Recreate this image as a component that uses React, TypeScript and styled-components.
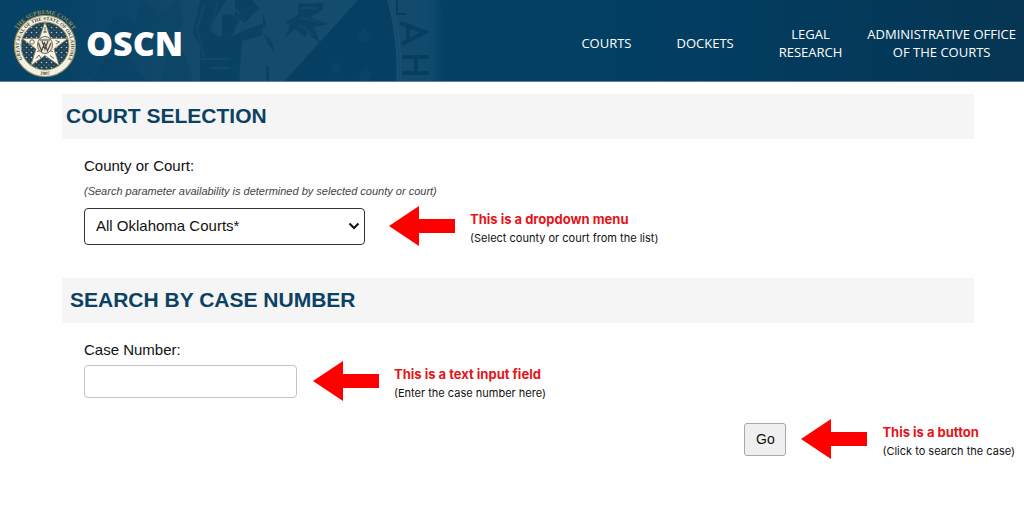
import React from 'react';
import styled, { createGlobalStyle } from 'styled-components';

const GlobalStyle = createGlobalStyle`
  *, *::before, *::after { box-sizing: border-box; }
  body { margin: 0; background: #fefefe; color: #111; font-family: "Liberation Sans", Arial, sans-serif; }
`;

const Header = styled.header`
  position: relative;
  display: flex;
  align-items: center;
  justify-content: space-between;
  min-height: 82px;
  padding: 0 8px 0 10px;
  background: linear-gradient(90deg, #064366 0%, #023f63 60%, #043a5c 80%, #053552 100%);
  border-bottom: 1px solid #5d7f97;
  overflow: hidden;
`;

const Backdrop = styled.svg`
  position: absolute;
  top: 0;
  left: 0;
  width: 460px;
  height: 82px;
`;

const Brand = styled.a`
  position: relative;
  display: flex;
  align-items: center;
  gap: 6px;
  color: #fff;
  text-decoration: none;
  font: 800 34px/48px "Open Sans", sans-serif;
`;

const SealArt = styled.svg`
  width: 70px;
  height: 80px;
`;

const BrandName = styled.span`
  padding-top: 4px;
`;

const Nav = styled.nav`
  position: relative;
  display: flex;
  align-items: center;
  gap: 45px;
  padding-top: 5px;
`;

const NavLink = styled.a<{ $wide?: boolean }>`
  margin-left: ${(p) => (p.$wide ? -20 : 0)}px;
  color: #fff;
  font: 500 13px/18px "Open Sans", sans-serif;
  text-align: center;
  text-decoration: none;
`;

const Main = styled.main`
  padding: 12px 0 40px 62px;
`;

const SectionTitle = styled.h2<{ $indent: number }>`
  margin: 0 50px 0 0;
  padding: 0 0 2px ${(p) => p.$indent}px;
  background: #f5f5f5;
  color: #0b4163;
  font-size: 21px;
  line-height: 43px;
  font-weight: 700;
`;

const Fields = styled.div`
  padding: 18px 9px 0 22px;
`;

const Label = styled.label`
  display: block;
  font-size: 15px;
  line-height: 18px;
`;

const Hint = styled.p`
  margin: 8px 0 5px;
  color: #444;
  font-size: 11px;
  line-height: 16px;
  font-style: italic;
`;

const Row = styled.div<{ $end?: boolean; $gap?: number; $after?: number }>`
  display: flex;
  align-items: center;
  justify-content: ${(p) => (p.$end ? 'flex-end' : 'flex-start')};
  gap: ${(p) => p.$gap ?? 16}px;
  margin-bottom: ${(p) => p.$after ?? 0}px;
`;

const SelectBox = styled.div`
  display: grid;
  align-items: center;
  width: 281px;
  > * { grid-area: 1 / 1; }
  > svg { justify-self: end; margin-right: 5px; pointer-events: none; }
`;

const Select = styled.select`
  appearance: none;
  width: 100%;
  height: 37px;
  padding: 0 30px 2px 11px;
  border: 1px solid #333;
  border-radius: 4px;
  background: #fff;
  color: #111;
  font: 15px "Liberation Sans", Arial, sans-serif;
`;

const TextInput = styled.input`
  width: 213px;
  height: 33px;
  padding: 0 8px;
  border: 1px solid #c4c4c4;
  border-radius: 4px;
  background: #fff;
  font: 15px "Liberation Sans", Arial, sans-serif;
`;

const GoButton = styled.button`
  width: 42px;
  height: 33px;
  padding: 0;
  border: 1px solid #a8a8a8;
  border-radius: 3px;
  background: #efefef;
  color: #111;
  font: 14px "Liberation Sans", Arial, sans-serif;
`;

const CalloutBox = styled.div`
  display: flex;
  align-items: center;
  gap: 15px;
`;

const Arrow = styled.svg`
  flex: none;
  width: 66px;
  height: 40px;
`;

const Note = styled.p`
  margin: 0;
  padding-top: 6px;
  font: 11px/19px Inter, sans-serif;
  white-space: nowrap;
`;

const NoteTitle = styled.strong`
  display: block;
  color: #e3151a;
  font-size: 13px;
  font-weight: 700;
`;

function Callout({ title, text }: { title: string; text: string }) {
  return (
    <CalloutBox>
      <Arrow viewBox="0 0 66 40" aria-hidden="true">
        <path d="M0 20 30 0v13h36v14H30v13z" fill="#fe0000" />
      </Arrow>
      <Note>
        <NoteTitle>{title}</NoteTitle>
        {text}
      </Note>
    </CalloutBox>
  );
}

const STAR = 'M0-24 5.6-7.6 22.8-7.4 9 3 14.1 19.4 0 9.6-14.1 19.4-9 3-22.8-7.4-5.6-7.6z';

function Seal() {
  return (
    <SealArt viewBox="-35 -45 70 80" role="img" aria-label="Supreme Court seal">
      <defs>
        <path id="arcOuter" d="M-30-11A32 32 0 0 1 30-11" />
        <path id="arcInner" d="M-19.500 17.500A26 26 0 1 1 19.500 17.500" />
        <path id="arcYear" d="M-12 26.500A30 30 0 0 0 12 26.500" />
        <pattern id="dots" width="5" height="5" patternUnits="userSpaceOnUse">
          <circle cx="1.500" cy="1.500" r=".8" fill="#b9c6cd" />
          <circle cx="4" cy="4" r=".5" fill="#93a8b4" />
        </pattern>
      </defs>
      <circle r="30.500" fill="#f3f1e6" stroke="#a4935a" strokeWidth="1.200" />
      <circle r="24" fill="#1d4258" stroke="#a4935a" />
      <circle r="23.500" fill="url(#dots)" />
      <path d={STAR} fill="#f6f4ea" stroke="#8d8357" strokeWidth=".8" />
      <g fill="none" stroke="#6b6c58" strokeWidth="1">
        <circle cx="-13" cy="-4" r="2.200" />
        <path d="M10.500-5.500l4 1.500-3.500 2M-9 12.500l3-3.500 2 3M5 9.500l4 3M0-19v6M-2-14h4" />
        <path d="M-8 5.500q4-2 6 1M8 5.500q-4-2-6 1" />
      </g>
      <ellipse rx="7.500" ry="8.500" cy="-1" fill="#e9e5d5" stroke="#756d4b" />
      <path d="M-6.500-3l3 8 3-8 3 8 3.500-8M-3-5l3 8 3-8M-5-6h10" fill="none" stroke="#494b43" strokeWidth="1.200" />
      <g fontFamily="Liberation Serif, serif" fontWeight="700" textAnchor="middle">
        <text fontSize="6" fill="#98904f">
          <textPath href="#arcOuter" startOffset="50%">THE SUPREME COURT</textPath>
        </text>
        <text fontSize="5" fill="#444a40">
          <textPath href="#arcInner" startOffset="50%">GREAT SEAL OF THE STATE OF OKLAHOMA</textPath>
        </text>
        <text fontSize="5" fill="#444a40">
          <textPath href="#arcYear" startOffset="50%">1907</textPath>
        </text>
      </g>
    </SealArt>
  );
}

function HeaderArt() {
  return (
    <Backdrop viewBox="0 0 460 82" aria-hidden="true">
      <defs>
        <linearGradient id="fade">
          <stop offset="0" stopColor="#15496b" stopOpacity=".2" />
          <stop offset=".5" stopColor="#154b6c" />
          <stop offset="1" stopColor="#154d6f" />
        </linearGradient>
        <linearGradient id="band">
          <stop offset="0" stopColor="#154b6d" />
          <stop offset=".7" stopColor="#104a6d" />
          <stop offset="1" stopColor="#023f63" />
        </linearGradient>
      </defs>
      <path d="M70 0H358L284 82H70z" fill="url(#fade)" />
      <path d="M358 0h30l8 82H284z" fill="#063f62" />
      <path d="M388 0h52q10 40 6 82h-50q2-42-8-82z" fill="url(#band)" />
      <path d="M388 0q11 40 10 82M392 0q10 40 9 82" fill="none" stroke="#1c5273" />
      <g fill="#063f61" opacity=".7">
        <path d="M200 0h26l-10 17-6 14 7 5 12 2 11 44h-40V46l-7-13z" />
        <path d="M222 16q10-5 17 5l-8 16 14-7 19-7-2 12-20 6-3 41h-22l5-28z" />
        <path d="M235 0h17l7 8-14 15-10-7zM285 22l13-7V4l25-1v7l-13 7 18 7-14 3 6 16-8-6-5-5-2 5-10-8-10 9 5-13z" />
        <path d="M263 12l4 16-4-3zM264 34l8 8 2 10-6-8zM266 66h3v16h-3z" />
        <path d="M104 38l7-17q16-11 25 7l-3 24-15 12zM142 0l20 13 17-13 5 22-12 16-16-8-11 15-12-14z" opacity=".4" />
        <path d="M92 82l12-22 22-7 20 29zM160 82l9-34 17 8 7 26z" opacity=".4" />
      </g>
      <g fill="none" stroke="#154b6d" strokeWidth="2" opacity=".7">
        <path d="M205 3l-8 25 8 35M218 2l-7 27M198 59h32M231 5l9 9M210 68h20" />
        <path d="M301 8h16M300 18l18 3M299 24l14 11" />
      </g>
      <g fill="none" stroke="#063c5e" strokeWidth="4" opacity=".8">
        <path d="M397 0v14h9" strokeWidth="2" />
        <path d="M400 23l25 9-23 12M408 26v13M402 57h27M402 73h27M416 58v14" />
      </g>
      <g fill="#114a6c">
        <path d="M363 27l3 5 6 1-4 4 1 6-6-3-5 3 1-6-4-4 6-1zM336 59l2 5 6 1-4 4 1 6-5-3-5 3 1-6-4-4 6-1zM366 66l2 5 6 1-4 4 1 6h-11l1-6-4-4 6-1z" opacity=".4" />
      </g>
    </Backdrop>
  );
}

export default function App() {
  return (
    <>
      <GlobalStyle />
      <Header>
        <HeaderArt />
        <Brand href="#">
          <Seal />
          <BrandName>OSCN</BrandName>
        </Brand>
        <Nav>
          <NavLink href="#">COURTS</NavLink>
          <NavLink href="#">DOCKETS</NavLink>
          <NavLink href="#">LEGAL<br />RESEARCH</NavLink>
          <NavLink href="#" $wide>ADMINISTRATIVE OFFICE<br />OF THE COURTS</NavLink>
        </Nav>
      </Header>
      <Main>
        <SectionTitle $indent={4}>COURT SELECTION</SectionTitle>
        <Fields>
          <Label htmlFor="court">County or Court:</Label>
          <Hint>(Search parameter availability is determined by selected county or court)</Hint>
          <Row $gap={24} $after={30}>
            <SelectBox>
              <Select id="court"><option>All Oklahoma Courts*</option></Select>
              <svg width="12" height="8" viewBox="0 0 12 8" aria-hidden="true">
                <path d="M1.500 1.500 6 6l4.500-4.500" fill="none" stroke="#111" strokeWidth="2" />
              </svg>
            </SelectBox>
            <Callout title="This is a dropdown menu" text="(Select county or court from the list)" />
          </Row>
        </Fields>
        <SectionTitle $indent={8}>SEARCH BY CASE NUMBER</SectionTitle>
        <Fields>
          <Label htmlFor="case">Case Number:</Label>
          <Row $after={14}>
            <TextInput id="case" />
            <Callout title="This is a text input field" text="(Enter the case number here)" />
          </Row>
          <Row $end $gap={15}>
            <GoButton type="button">Go</GoButton>
            <Callout title="This is a button" text="(Click to search the case)" />
          </Row>
        </Fields>
      </Main>
    </>
  );
}
